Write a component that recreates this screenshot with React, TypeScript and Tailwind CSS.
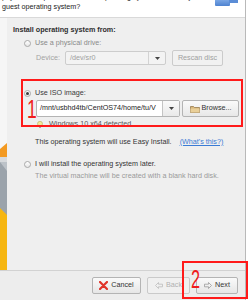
const Radio = ({ checked = false }: { checked?: boolean }) => (
  <span className="flex h-[7px] w-[7px] items-center justify-center rounded-full border border-[#a9a9a9] bg-linear-to-b from-white to-[#e6e6e6]">
    {checked && <span className="h-[3px] w-[3px] rounded-full bg-[#3b3b3b]" />}
  </span>
);

const Caret = () => (
  <svg width="5" height="3" viewBox="0 0 5 3">
    <path d="M0 0h5L2.5 3z" fill="#444" />
  </svg>
);

const App = () => {
  return (
    <div className="relative flex h-[300px] w-[250px] overflow-hidden bg-[#ededed] font-['Liberation_Sans',Arial,sans-serif] text-[7.2px] text-[#333]">
      {/* dialog */}
      <div className="flex w-[245px] flex-col">
        {/* header */}
        <div className="h-[18px] shrink-0 overflow-hidden border-b border-[#d9d9d9] bg-white pl-[2px]">
          <div className="mt-[-8px] leading-[10px] text-[#222]">
            <div className="whitespace-nowrap">
              physical computer; it needs an operating system. How will you install the
            </div>
            <div>guest operating system?</div>
          </div>
        </div>

        {/* body */}
        <div className="flex flex-1">
          {/* side picture */}
          <div className="flex w-[7px] flex-col">
            <div className="flex-1 bg-[#f6f6f6]" />
            <svg width="7" height="127" viewBox="0 0 7 127" preserveAspectRatio="none">
              <rect x="0" y="0" width="7" height="127" fill="#f6f6f6" />
              <polygon points="0,6 7,0 7,14 0,14" fill="#f39a22" />
              <rect x="0" y="14" width="7" height="5" fill="#d7dadd" />
              <rect x="0" y="19" width="7" height="108" fill="#9ba3ab" />
              <polygon points="0,19 7,19 7,28" fill="#bcc2c8" />
              <polygon points="0,65 7,72 7,127 0,127" fill="#f6b611" />
            </svg>
          </div>

          {/* content */}
          <div className="flex flex-1 flex-col bg-[#efefef] pl-[6px]">
            <div className="mt-[7px] font-bold leading-[10px] text-[#2e2e2e]">
              Install operating system from:
            </div>

            <div className="mt-[3px] ml-[11px] flex h-[10px] items-center gap-[4px] text-[#8a8a8a]">
              <Radio />
              <span>Use a physical drive:</span>
            </div>

            <div className="mt-[2px] ml-[23px] flex h-[16px] items-center">
              <span className="w-[29px] text-[#a3a3a3]">Device:</span>
              <div className="flex h-[14px] w-[101px] items-center rounded-[2px] border border-[#cdcdcd] bg-[#f3f3f3]">
                <span className="flex-1 pl-[4px] text-[#a0a0a0]">/dev/sr0</span>
                <span className="flex h-full w-[17px] items-center justify-center border-l border-[#d3d3d3]">
                  <Caret />
                </span>
              </div>
              <div className="ml-[6px] flex h-[16px] w-[51px] items-center justify-center rounded-[2px] border border-[#cbcbcb] bg-[#f1f1f1] text-[#a0a0a0]">
                Rescan disc
              </div>
            </div>

            <div className="mt-[22px] ml-[11px] flex h-[10px] items-center gap-[4px] text-[#3a3a3a]">
              <Radio checked />
              <span>Use ISO image:</span>
            </div>

            <div className="mt-[2px] ml-[23px] flex h-[17px] items-center">
              <div className="flex h-[17px] w-[144px] items-center rounded-[2px] border border-[#b4b4b4] bg-white">
                <span className="flex-1 overflow-hidden whitespace-nowrap pl-[3px] text-[#222]">
                  /mnt/usbhd4tb/CentOS74/home/tu/V
                </span>
                <span className="flex h-full w-[17px] items-center justify-center border-l border-[#c4c4c4] bg-linear-to-b from-[#fafafa] to-[#e9e9e9]">
                  <Caret />
                </span>
              </div>
              <div className="ml-[2px] flex h-[17px] w-[57px] items-center justify-center gap-[2px] rounded-[2px] border border-[#b4b4b4] bg-linear-to-b from-[#fafafa] to-[#e8e8e8] text-[#333]">
                <svg width="10" height="8" viewBox="0 0 10 8">
                  <path d="M0.5 1.5h3l1 1h5v5h-9z" fill="#d9b77a" stroke="#8c7040" strokeWidth="0.7" />
                  <path d="M0.5 3.5h9v4h-9z" fill="#e9cf98" />
                </svg>
                <span>Browse...</span>
              </div>
            </div>

            <div className="mt-[2px] ml-[24px] flex h-[10px] items-center gap-[6px] text-[#555]">
              <svg width="6" height="7" viewBox="0 0 6 7">
                <circle cx="3" cy="2.8" r="2.5" fill="#f2ea9a" stroke="#b5ad5c" strokeWidth="0.6" />
                <rect x="2" y="5.2" width="2" height="1.6" fill="#9a9a9a" />
              </svg>
              <span>Windows 10 x64 detected</span>
            </div>

            <div className="mt-[8px] ml-[22px] flex h-[10px] items-center gap-[8px]">
              <span>This operating system will use Easy Install.</span>
              <span className="text-[#3a7bd5] underline">(What's this?)</span>
            </div>

            <div className="mt-[12px] ml-[11px] flex h-[10px] items-center gap-[4px]">
              <Radio />
              <span>I will install the operating system later.</span>
            </div>

            <div className="mt-[2px] ml-[22px] h-[10px] leading-[10px] text-[#9a9a9a]">
              The virtual machine will be created with a blank hard disk.
            </div>
          </div>
        </div>

        {/* footer */}
        <div className="flex h-[30px] shrink-0 items-center justify-end gap-[6px] border-t border-[#d2d2d2] pr-[7px]">
          <div className="flex h-[17px] w-[49px] items-center justify-center gap-[3px] rounded-[2px] border border-[#b4b4b4] bg-linear-to-b from-[#fafafa] to-[#e6e6e6]">
            <svg width="9" height="9" viewBox="0 0 9 9">
              <path d="M1 1L8 8M8 1L1 8" stroke="#e0342a" strokeWidth="2.2" strokeLinecap="round" />
            </svg>
            <span>Cancel</span>
          </div>
          <div className="flex h-[17px] w-[43px] items-center justify-center gap-[3px] rounded-[2px] border border-[#cacaca] bg-[#f0f0f0] text-[#b0b0b0]">
            <svg width="8" height="7" viewBox="0 0 8 7">
              <path d="M0.5 3.5L3.5 0.5V2.2H7.5V4.8H3.5V6.5Z" fill="none" stroke="#bdbdbd" strokeWidth="0.8" />
            </svg>
            <span>Back</span>
          </div>
          <div className="flex h-[17px] w-[42px] items-center justify-center gap-[3px] rounded-[2px] border border-[#b4b4b4] bg-linear-to-b from-[#fafafa] to-[#e6e6e6]">
            <svg width="8" height="7" viewBox="0 0 8 7">
              <path d="M7.5 3.5L4.5 0.5V2.2H0.5V4.8H4.5V6.5Z" fill="none" stroke="#9a9a9a" strokeWidth="0.8" />
            </svg>
            <span>Next</span>
          </div>
        </div>
      </div>

      {/* window behind */}
      <div className="flex-1 border-l border-[#b9b9b9] bg-white" />

      {/* header logo peeking in */}
      <div className="absolute left-[215px] top-0 h-[6px] w-[15px] rounded-b-[1px] bg-linear-to-b from-[#7aa6e4] to-[#4d82d0]" />
      <div className="absolute left-[229px] top-0 h-[3px] w-[9px] bg-[#5b8dd6]" />

      {/* annotations */}
      <div className="absolute left-[21px] top-[79px] h-[48px] w-[222px] border-2 border-[#ff1a1a]" />
      <div className="absolute left-[182px] top-[261px] h-[38px] w-[66px] border-2 border-[#ff1a1a]" />
      <span className="absolute left-[27px] top-[97px] origin-left scale-x-70 text-[25px] leading-[25px] text-[#f01c1c]">
        1
      </span>
      <span className="absolute left-[191px] top-[267px] origin-left scale-x-65 text-[25px] leading-[25px] text-[#f01c1c]">
        2
      </span>
    </div>
  );
};

export default App;
